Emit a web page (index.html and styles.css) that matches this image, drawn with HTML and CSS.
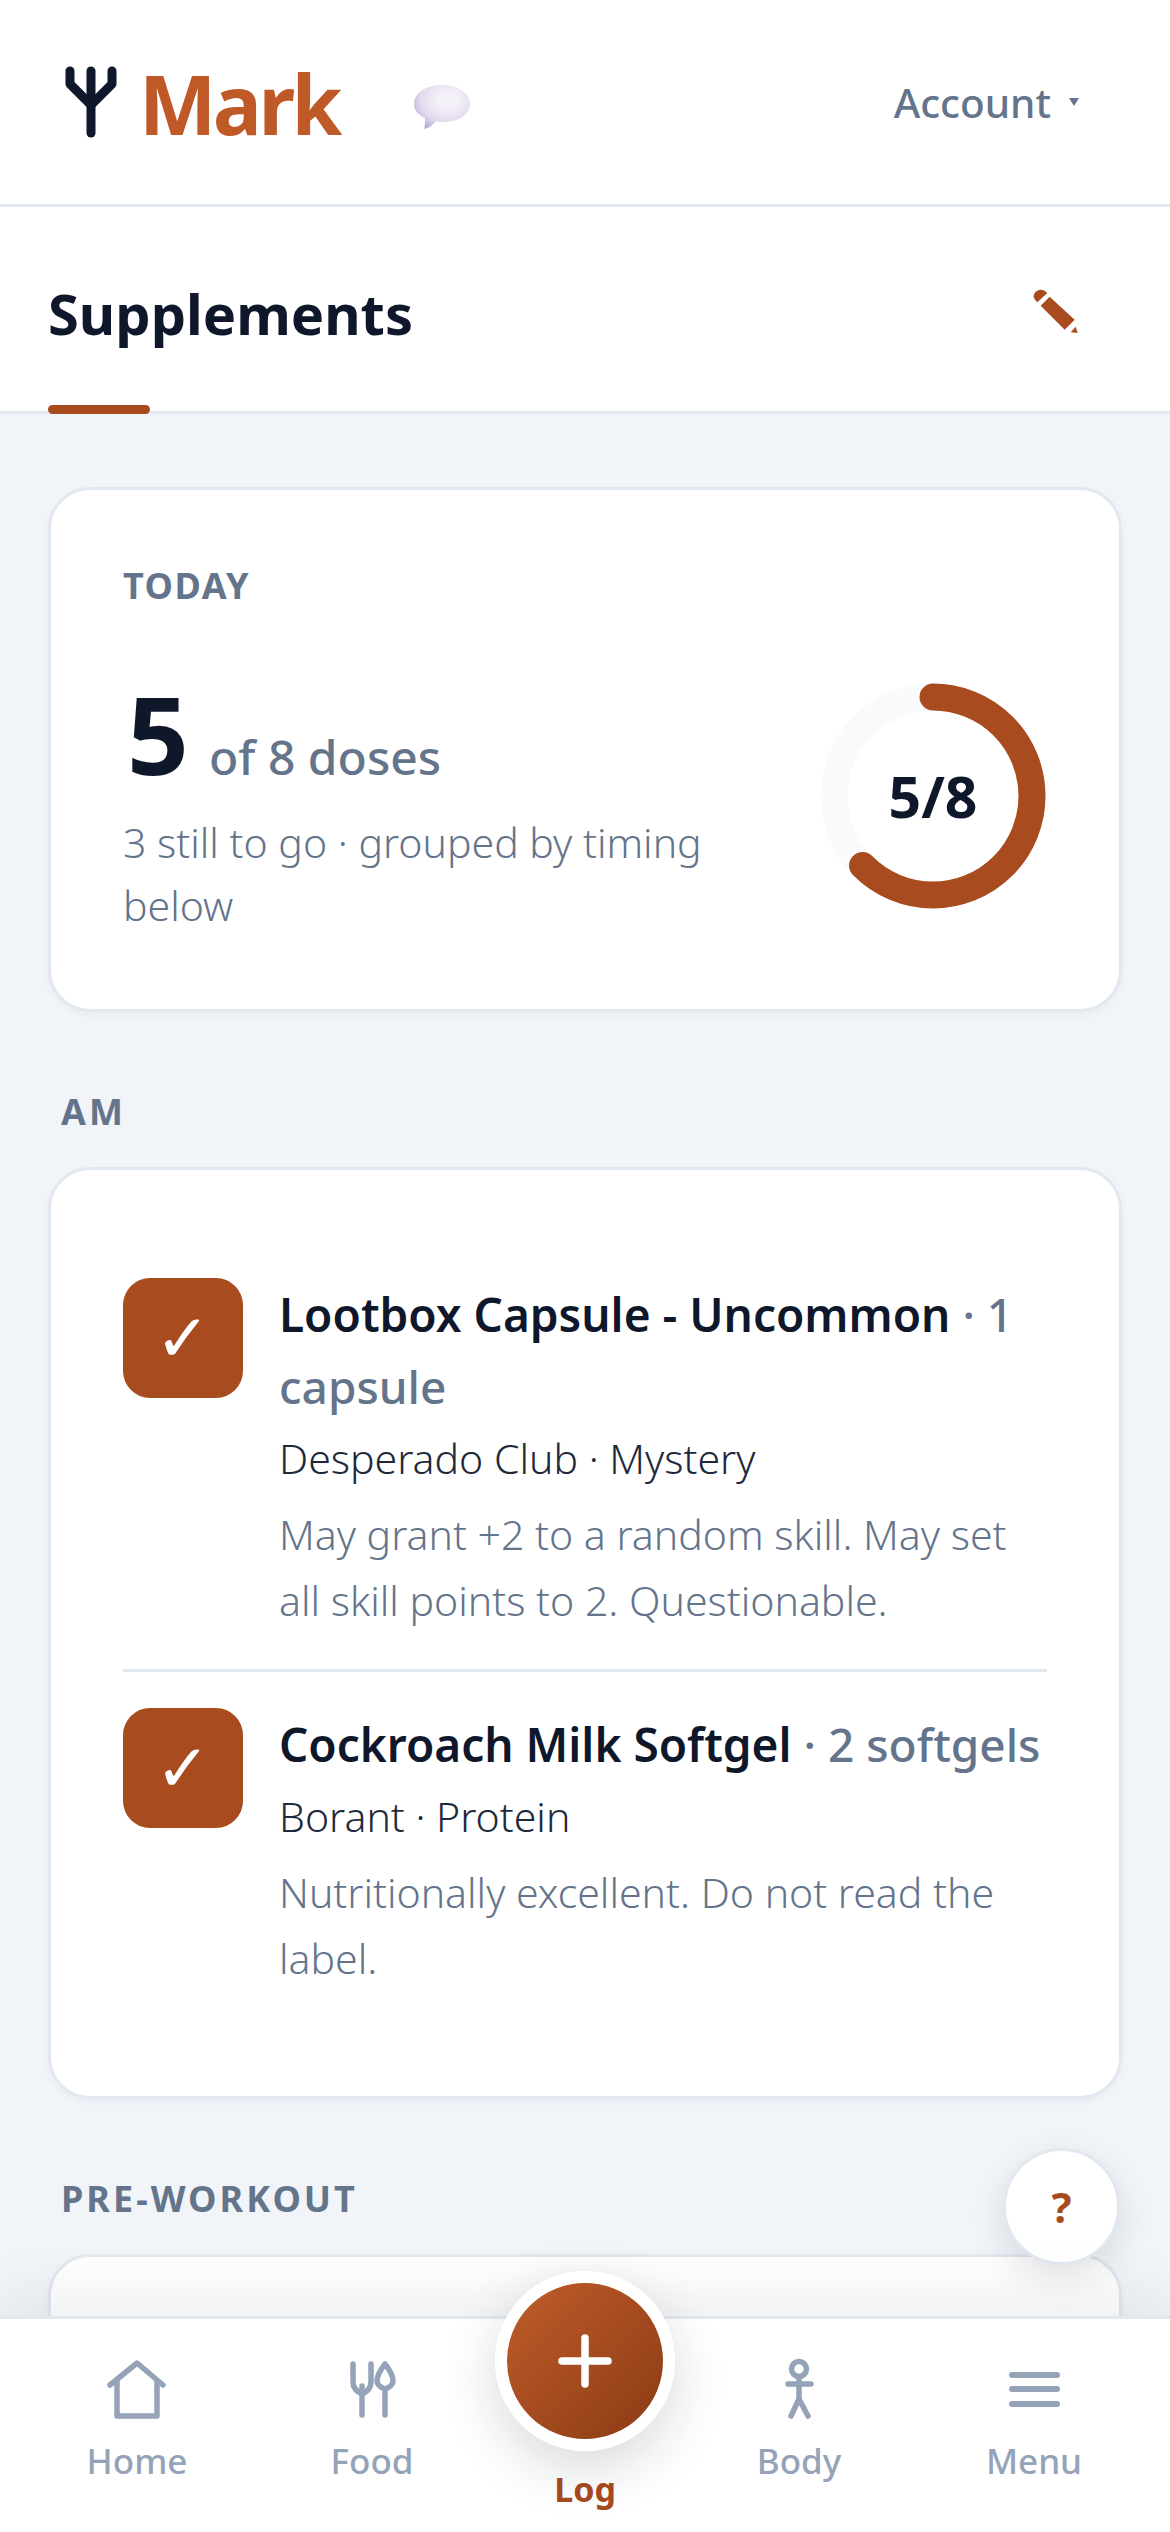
FILE: index.html
```html
<!DOCTYPE html>
<html>
<head>
  <title>Supplements</title>
  <link rel="stylesheet" href="styles.css">
</head>
<body>
  <div class="app">
    <header class="topbar">
      <div class="brand">
        <svg class="brand-logo" viewBox="0 0 60 78" fill="none" stroke="#0f172a" stroke-width="9" stroke-linecap="round" stroke-linejoin="round">
          <path d="M30 8V70"/>
          <path d="M9 8V21L30 42L51 21V8"/>
        </svg>
        <span class="brand-name">Mark</span>
        <svg class="brand-chat" viewBox="0 0 58 46">
          <defs>
            <radialGradient id="bubble" cx="0.6" cy="0.35" r="0.7">
              <stop offset="0.25" stop-color="#f4f1f8"/>
              <stop offset="0.7" stop-color="#e3daef"/>
              <stop offset="1" stop-color="#bcaedb"/>
            </radialGradient>
          </defs>
          <path d="M29 1C45 1 57 9 57 20C57 31 45 38 30 38C27 38 25 38 23 37.500C20 41 16 44 11 45C12 42 12 38 12 34C5 31 1 26 1 20C1 9 13 1 29 1Z" fill="url(#bubble)"/>
        </svg>
      </div>
      <div class="account">Account <span class="caret"></span></div>
    </header>

    <div class="tabbar">
      <h1 class="tab-title">Supplements</h1>
      <svg class="tab-edit" viewBox="0 0 135 132" fill="#a84b1f">
        <path d="M43 12L13 40Q2 30 2 22Q4 4 22 2Q34 2 43 12Z"/>
        <path d="M50 23L125 92L95 122L23 50Z"/>
        <path d="M128 113L134 132L113 130Z"/>
      </svg>
    </div>

    <main class="content">
      <section class="card summary">
        <div class="eyebrow">TODAY</div>
        <div class="summary-row">
          <div class="summary-text">
            <div class="summary-count"><span class="count-big">5</span> <span class="count-of">of 8 doses</span></div>
            <p class="summary-note">3 still to go · grouped by timing below</p>
          </div>
          <div class="ring">
            <svg viewBox="0 0 228 228" fill="none" stroke-width="27">
              <circle cx="114" cy="114" r="99" stroke="#f8fafc"/>
              <circle cx="114" cy="114" r="99" stroke="#a84b1f" stroke-linecap="round" stroke-dasharray="388.8 622" transform="rotate(-90 114 114)"/>
            </svg>
            <span class="ring-label">5/8</span>
          </div>
        </div>
      </section>

      <h2 class="group-label">AM</h2>
      <section class="card dose-list">
        <div class="dose">
          <div class="dose-check">✓</div>
          <div class="dose-body">
            <div class="dose-title">Lootbox Capsule - Uncommon <span class="dose-amount">· 1 capsule</span></div>
            <div class="dose-brand">Desperado Club · Mystery</div>
            <div class="dose-note">May grant +2 to a random skill. May set all skill points to 2. Questionable.</div>
          </div>
        </div>
        <div class="dose">
          <div class="dose-check">✓</div>
          <div class="dose-body">
            <div class="dose-title">Cockroach Milk Softgel <span class="dose-amount">· 2 softgels</span></div>
            <div class="dose-brand">Borant · Protein</div>
            <div class="dose-note">Nutritionally excellent. Do not read the label.</div>
          </div>
        </div>
      </section>

      <h2 class="group-label">PRE-WORKOUT</h2>
      <section class="card stub"></section>
    </main>

    <button class="help">?</button>

    <nav class="bottomnav">
      <a class="nav-item">
        <svg class="nav-icon" viewBox="0 0 72 72" fill="none" stroke="#94a3b8" stroke-width="5.500" stroke-linecap="round" stroke-linejoin="round">
          <path d="M9 31L36 9L62 31"/>
          <path d="M16 27V62H56V27"/>
        </svg>
        <span>Home</span>
      </a>
      <a class="nav-item">
        <svg class="nav-icon" viewBox="0 0 72 72" fill="none" stroke="#94a3b8" stroke-width="5.500" stroke-linecap="round" stroke-linejoin="round">
          <path d="M17 10V28Q17 36 26 40Q35 36 35 28V10"/>
          <path d="M26 32V61"/>
          <path d="M49 10Q41 20 41 27Q41 32 49 35Q57 32 57 27Q57 20 49 10Z"/>
          <path d="M49 35V61"/>
        </svg>
        <span>Food</span>
      </a>
      <a class="nav-item nav-log">
        <span class="log-button">
          <svg viewBox="0 0 54 54" fill="none" stroke="#fff" stroke-width="7.500" stroke-linecap="round">
            <path d="M27 4V50"/>
            <path d="M4 27H50"/>
          </svg>
        </span>
        <span>Log</span>
      </a>
      <a class="nav-item">
        <svg class="nav-icon" viewBox="0 0 72 72" fill="none" stroke="#94a3b8" stroke-width="5.500" stroke-linecap="round" stroke-linejoin="round">
          <circle cx="36" cy="15" r="7.500"/>
          <path d="M36 23V46"/>
          <path d="M25 30H48"/>
          <path d="M28 62L36 45L45 62"/>
        </svg>
        <span>Body</span>
      </a>
      <a class="nav-item">
        <svg class="nav-icon" viewBox="0 0 72 72" fill="none" stroke="#94a3b8" stroke-width="6" stroke-linecap="round">
          <path d="M14 21H59"/>
          <path d="M14 35H59"/>
          <path d="M14 50H59"/>
        </svg>
        <span>Menu</span>
      </a>
    </nav>
  </div>
</body>
</html>
```

FILE: styles.css
```css
html, body {
  margin: 0;
  padding: 0;
  height: 100%;
}

body {
  background: #f1f5f9;
  font-family: "Noto Sans", "Open Sans", sans-serif;
  color: #0f172a;
}

.app {
  position: relative;
  width: 1170px;
  height: 2532px;
  overflow: hidden;
}

/* top bar */
.topbar {
  display: flex;
  align-items: center;
  justify-content: space-between;
  height: 204px;
  padding: 0 91px 0 61px;
  background: #fff;
  border-bottom: 3px solid #e2e8f0;
  box-shadow: 0 3px 9px rgba(15, 23, 42, 0.05);
  position: relative;
}

.brand {
  display: flex;
  align-items: center;
}

.brand-logo {
  width: 60px;
  height: 78px;
}

.brand-name {
  margin-left: 18px;
  padding-top: 2px;
  font-size: 82px;
  font-weight: 700;
  letter-spacing: -3.500px;
  line-height: 1;
  color: #bf5a28;
}

.brand-chat {
  width: 58px;
  height: 46px;
  margin: 10px 0 0 74px;
}

.account {
  display: flex;
  align-items: center;
  gap: 18px;
  font-size: 40.500px;
  font-weight: 500;
  color: #64748b;
}

.caret {
  width: 0;
  height: 0;
  border-left: 5px solid transparent;
  border-right: 5px solid transparent;
  border-top: 8px solid #64748b;
}

/* title */
.tabbar {
  display: flex;
  align-items: center;
  justify-content: space-between;
  height: 196px;
  padding: 8px 92px 0 48px;
  background: #fff;
  border-bottom: 3px solid #e2e8f0;
  position: relative;
}

.tabbar::after {
  content: "";
  position: absolute;
  left: 48px;
  bottom: -3px;
  width: 102px;
  height: 9px;
  border-radius: 6px;
  background: #a84b1f;
}

.tab-title {
  margin: 0;
  font-size: 56px;
  font-weight: 700;
}

.tab-edit {
  width: 45px;
  height: 44px;
  margin-top: -4px;
}

/* content */
.content {
  padding: 73px 48px 0;
}

.card {
  background: #fff;
  border: 3px solid #e2e8f0;
  border-radius: 42px;
  box-shadow: 0 3px 9px rgba(15, 23, 42, 0.04);
}

.summary {
  padding: 72px;
}

.eyebrow {
  font-size: 36px;
  font-weight: 700;
  letter-spacing: 1.500px;
  line-height: 48px;
  color: #64748b;
}

.summary-row {
  display: flex;
  align-items: center;
  justify-content: space-between;
  gap: 48px;
  margin-top: 44px;
}

.summary-text {
  flex: 1;
}

.summary-count {
  padding-top: 3px;
  line-height: 0;
}

.count-big {
  margin-left: 4px;
  font-size: 108px;
  font-weight: 700;
  line-height: 154px;
}

.count-of {
  margin-left: 16px;
  font-size: 48px;
  font-weight: 500;
  line-height: 48px;
  color: #64748b;
}

.summary-note {
  margin: 0;
  font-size: 41px;
  font-weight: 300;
  line-height: 63px;
  color: #64748b;
}

.ring {
  position: relative;
  flex: none;
  width: 228px;
  height: 228px;
}

.ring svg {
  display: block;
  width: 100%;
  height: 100%;
}

.ring-label {
  position: absolute;
  inset: 0;
  display: flex;
  align-items: center;
  justify-content: center;
  font-size: 57px;
  font-weight: 700;
}

.group-label {
  margin: 76px 0 31px;
  padding: 0 13px;
  font-size: 36px;
  font-weight: 700;
  line-height: 48px;
  letter-spacing: 3px;
  color: #64748b;
}

/* dose rows */
.dose-list {
  padding: 72px 72px 69px;
}

.dose {
  display: flex;
  gap: 36px;
  padding: 36px 0;
}

.dose + .dose {
  border-top: 3px solid #e2e8f0;
}

.dose-check {
  flex: none;
  display: flex;
  align-items: center;
  justify-content: center;
  width: 120px;
  height: 120px;
  border-radius: 27px;
  background: #a84b1f;
  color: #fff;
  font-family: "DejaVu Sans", sans-serif;
  font-size: 66px;
}

.dose-title {
  font-size: 46px;
  font-weight: 600;
  line-height: 72px;
}

.dose-amount {
  font-weight: 500;
  color: #64748b;
}

.dose-brand {
  margin-top: 6px;
  font-size: 41px;
  font-weight: 300;
  line-height: 60px;
  color: #1e293b;
}

.dose-note {
  margin-top: 13px;
  font-size: 41px;
  font-weight: 300;
  line-height: 66px;
  color: #64748b;
}

.stub {
  height: 400px;
}

/* floating help */
.help {
  position: absolute;
  right: 50px;
  top: 2148px;
  width: 117px;
  height: 117px;
  border: 3px solid #e2e8f0;
  border-radius: 50%;
  background: #fff;
  box-shadow: 0 12px 36px rgba(15, 23, 42, 0.12);
  color: #a84b1f;
  font-family: inherit;
  font-size: 42px;
  font-weight: 700;
}

/* bottom nav */
.bottomnav {
  position: absolute;
  left: 0;
  right: 0;
  bottom: 0;
  display: grid;
  grid-template-columns: 274px 196px 230px 198px 272px;
  height: 213px;
  background: #fff;
  border-top: 3px solid #e2e8f0;
  box-shadow: 0 -18px 60px rgba(15, 23, 42, 0.08);
}

.nav-item {
  display: flex;
  flex-direction: column;
  align-items: center;
  padding-top: 35px;
  font-size: 35px;
  font-weight: 500;
  line-height: 48px;
  color: #94a3b8;
}

.nav-icon {
  width: 72px;
  height: 72px;
  margin-bottom: 11px;
}

.nav-log {
  position: relative;
  padding-top: 146px;
  font-size: 34px;
  font-weight: 700;
  color: #a84b1f;
}

.log-button {
  position: absolute;
  top: -48px;
  left: 25px;
  display: flex;
  align-items: center;
  justify-content: center;
  width: 156px;
  height: 156px;
  border: 12px solid #fff;
  border-radius: 50%;
  background: linear-gradient(135deg, #c05c2a, #8a3b15);
  box-shadow: 0 18px 54px rgba(15, 23, 42, 0.16);
}

.log-button svg {
  width: 54px;
  height: 54px;
}
```
